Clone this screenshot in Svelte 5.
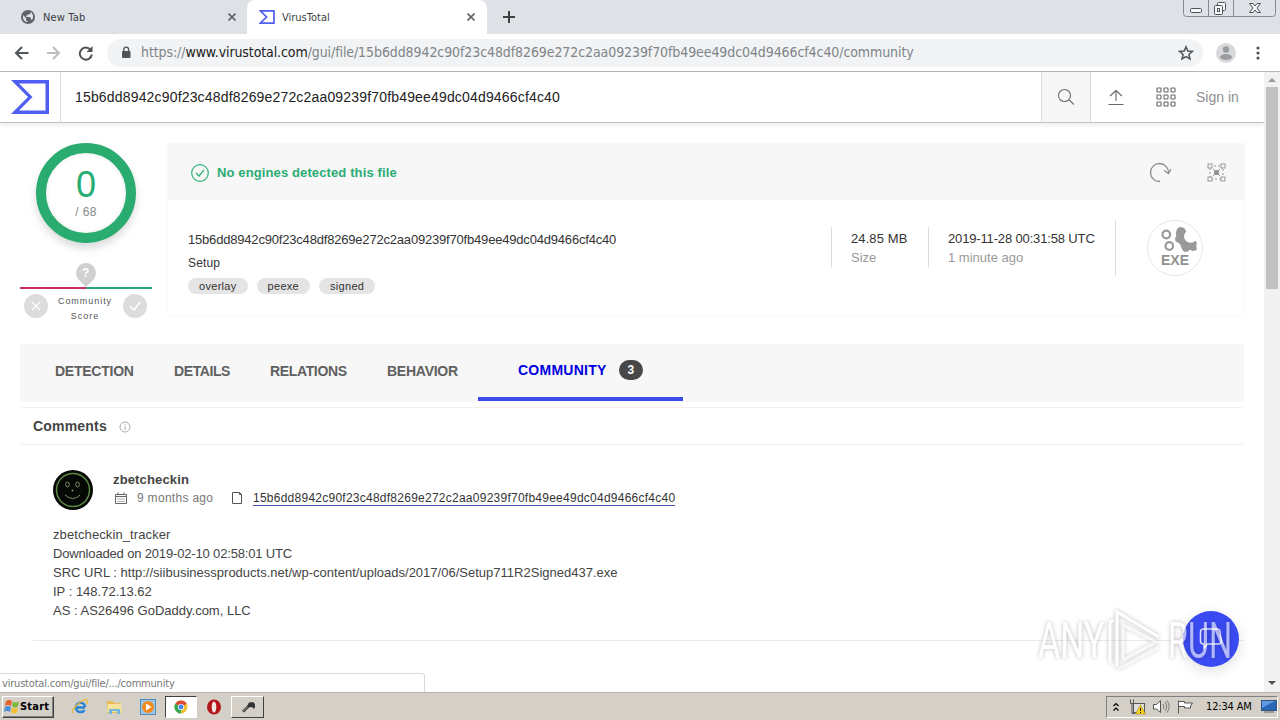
<script>
    const hash = '15b6dd8942c90f23c48df8269e272c2aa09239f70fb49ee49dc04d9466cf4c40';
    const tags = ['overlay', 'peexe', 'signed'];
    const tabs = ['Detection', 'Details', 'Relations', 'Behavior'];
    const cells = [0, 7, 14];
    const corners = [[1, 1], [14, 1], [1, 14], [14, 14]];
    const comment = [
        'zbetcheckin_tracker',
        'Downloaded on 2019-02-10 02:58:01 UTC',
        'SRC URL : http://siibusinessproducts.net/wp-content/uploads/2017/06/Setup711R2Signed437.exe',
        'IP : 148.72.13.62',
        'AS : AS26496 GoDaddy.com, LLC'
    ];
</script>

<div class="screen">
    <div class="tabstrip">
        <div class="tab tab-idle">
            <svg width="14" height="14" viewBox="0 0 14 14">
                <circle cx="7" cy="7" r="7" fill="#5f6368" />
                <path d="M2 5l3 3v2l2 2c-3 0-5-2-5-5zM6 2h4l-1 2-3 1-1 2h4l1 2 1 1c2-3 1-6-1-8z" fill="#dee1e6" />
            </svg>
            <span class="t-newtab">New Tab</span>
            <svg class="close" width="8" height="8" viewBox="0 0 8 8"><path d="M0.5 0.5l7 7M7.500.5l-7 7" /></svg>
        </div>
        <div class="tab tab-active">
            <svg width="16" height="16" viewBox="0 0 38 34">
                <path d="M3 2.500H35.500V31.500H3L18 17Z" fill="none" stroke="#4d5ef0" stroke-width="4" />
            </svg>
            <span class="t-vt">VirusTotal</span>
            <svg class="close" width="8" height="8" viewBox="0 0 8 8"><path d="M0.5 0.5l7 7M7.500.5l-7 7" /></svg>
        </div>
        <svg class="plus" width="12" height="12" viewBox="0 0 12 12"><path d="M6 0v12M0 6h12" stroke="#3c4043" stroke-width="2" /></svg>
        <svg class="winbtns" width="94" height="18" viewBox="0 0 94 18">
            <path d="M.5 0V13.500Q.5 16.500 3.500 16.500H89.500Q92.500 16.500 92.500 13.500V0M25.500 0V16M50.500 0V16" fill="none" stroke="#85888f" />
            <g fill="#f8f8fa" stroke="#4c5058">
                <rect x="7.500" y="8.500" width="11" height="4" rx="1" />
                <rect x="34.500" y="2.500" width="8" height="8" rx="1" />
                <rect x="31.500" y="5.500" width="8" height="9" rx="1" />
                <rect x="34.500" y="8.500" width="2" height="3" />
                <path d="M66.500 3.500h3.500l2 2.500 2-2.500h3.500l-3.500 4.500 3.500 4.500h-3.500l-2-2.500-2 2.500h-3.500l3.500-4.500z" />
            </g>
        </svg>
    </div>

    <div class="toolbar">
        <svg class="nav" width="80" height="16" viewBox="0 0 80 16" fill="none" stroke-width="2">
            <path d="M14.500 8H2M8 2L2 8l6 6" stroke="#505458" />
            <path d="M33 8h12M39 2l6 6-6 6" stroke="#babcbe" />
            <path d="M76.500 4.800A6 6 0 1 0 77.800 9.500" stroke="#505458" />
            <path d="M78.500 1v6h-6z" fill="#505458" />
        </svg>
        <div class="omnibox">
            <svg width="10" height="13" viewBox="0 0 10 13">
                <rect x="1" y="5" width="8.500" height="7" rx="1" fill="#505458" />
                <path d="M2.800 5.500V3.500a2.400 2.400 0 0 1 4.800 0v2" fill="none" stroke="#505458" stroke-width="1.300" />
            </svg>
            <span class="url">https://<b>www.virustotal.com</b>/gui/file/{hash}/community</span>
            <svg class="star" width="16" height="16" viewBox="0 0 16 16">
                <path d="M8 1.800l1.800 4.200 4.600.400-3.500 3 1.100 4.500-4-2.400-4 2.400 1.100-4.500-3.500-3 4.600-.4z" fill="none" stroke="#505458" stroke-width="1.500" />
            </svg>
        </div>
        <svg class="profile" width="20" height="20" viewBox="0 0 20 20">
            <circle cx="10" cy="10" r="10" fill="#d8d9db" />
            <circle cx="10" cy="6.500" r="3.200" fill="#9a9c9f" />
            <ellipse cx="10" cy="14" rx="6" ry="3" fill="#9a9c9f" />
        </svg>
        <svg width="4" height="14" viewBox="0 0 4 14" fill="#505458">
            <circle cx="2" cy="2" r="1.600" /><circle cx="2" cy="7" r="1.600" /><circle cx="2" cy="12" r="1.600" />
        </svg>
    </div>

    <div class="viewport">
        <div class="page">
            <header>
                <div class="brand">
                    <svg width="39" height="35" viewBox="0 0 39 35">
                        <path d="M0 0H38V34H0L17 17ZM8 3.500L21.500 17 8 30.500H34.500V3.500Z" fill="#4d5ef0" fill-rule="evenodd" />
                    </svg>
                </div>
                <div class="query">{hash}</div>
                <div class="search">
                    <svg width="18" height="18" viewBox="0 0 18 18" fill="none" stroke="#707070" stroke-width="1.100">
                        <circle cx="7.500" cy="7.500" r="6" /><path d="M12 12l5 4.500" />
                    </svg>
                </div>
                <div class="actions">
                    <svg width="16" height="16" viewBox="0 0 16 16" fill="none" stroke="#666" stroke-width="1.100">
                        <path d="M8 12V1.500M2 7l6-5.500L14 7M.5 15.500H15.500" />
                    </svg>
                    <svg class="apps" width="20" height="20" viewBox="0 0 20 20" fill="none" stroke="#666" stroke-width="1.100">
                        {#each cells as y}
                            {#each cells as x}
                                <rect x={x + 1} y={y + 1} width="4" height="4" rx=".6" />
                            {/each}
                        {/each}
                    </svg>
                    <span class="signin">Sign in</span>
                </div>
            </header>

            <main>
                <section class="summary">
                    <div class="score">
                        <div class="ring">
                            <span class="num">0</span>
                            <span class="total">/ 68</span>
                        </div>
                        <div class="gauge">
                            <svg width="20" height="24" viewBox="0 0 20 24">
                                <path d="M10 0a10 10 0 0 1 7 17L10 24 3 17A10 10 0 0 1 10 0z" fill="#d0d0d0" />
                            </svg>
                            <b>?</b>
                        </div>
                        <div class="bar"></div>
                        <div class="votes">
                            <svg width="24" height="24" viewBox="0 0 24 24">
                                <circle cx="12" cy="12" r="12" fill="#dcdcdc" /><path d="M8 8l8 8M16 8l-8 8" stroke="#fff" stroke-width="1.200" />
                            </svg>
                            <span>Community<br />Score</span>
                            <svg width="24" height="24" viewBox="0 0 24 24">
                                <circle cx="12" cy="12" r="12" fill="#dcdcdc" /><path d="M7 12l4 4 6-8" fill="none" stroke="#fff" stroke-width="1.400" />
                            </svg>
                        </div>
                    </div>

                    <div class="card">
                        <div class="verdict">
                            <svg width="18" height="18" viewBox="0 0 18 18" fill="none" stroke="#2fb279" stroke-width="1.200">
                                <circle cx="9" cy="9" r="8.300" /><path d="M5 9l3 3 5-6" />
                            </svg>
                            <span>No engines detected this file</span>
                            <svg class="reload" width="23" height="21" viewBox="0 0 23 21" fill="none" stroke="#8c8c8c" stroke-width="1.300">
                                <path d="M11 19.500A9 9 0 1 1 19.500 11M15 8.500l4.500 3 2.500-4.500" />
                            </svg>
                            <svg width="20" height="20" viewBox="0 0 20 20" fill="none" stroke="#999">
                                <rect x="3" y="3" width="13" height="13" stroke-dasharray="2 2" />
                                <g fill="#f7f7f7">
                                    {#each corners as [x, y]}
                                        <rect {x} {y} width="4" height="4" />
                                    {/each}
                                </g>
                                <rect x="7.500" y="7.500" width="4" height="4" fill="#888" /><path d="M6 6l7 7M13 6l-7 7" />
                            </svg>
                        </div>
                        <div class="facts">
                            <div class="file">
                                <div class="filehash">{hash}</div>
                                <div class="filename">Setup</div>
                                <div class="tags">
                                    {#each tags as tag}
                                        <span>{tag}</span>
                                    {/each}
                                </div>
                            </div>
                            <div class="fact size"><span>24.85 MB</span><small>Size</small></div>
                            <div class="fact date"><span>2019-11-28 00:31:58 UTC</span><small>1 minute ago</small></div>
                            <div class="type">
                                <svg width="56" height="56" viewBox="0 0 56 56">
                                    <circle cx="28" cy="28" r="27.500" fill="#fff" stroke="#e6e6e6" />
                                    <g fill="none" stroke="#999">
                                        <circle cx="19.300" cy="14.500" r="3.800" stroke-width="2.200" />
                                        <circle cx="22.300" cy="26" r="3.800" stroke-width="2.200" />
                                    </g>
                                    <path d="M30 9l3-2.300 4.300 1.300 2 3.700q-3 2.500-2 6.500 1.500 4 6 4.500 3 .3 5.200-2l1.300 2-.5 3 .5 4.300-4 1-3-1.300-2 1.800-3 .5-1.800-1.300-1.500-3-1.700-4-4.300-2.400-.5-3 1.300-2-.5-3.500z" fill="#999" />
                                    <text x="28" y="45" text-anchor="middle">EXE</text>
                                </svg>
                            </div>
                        </div>
                    </div>
                </section>

                <nav class="sections">
                    {#each tabs as tab}
                        <span class={tab.toLowerCase()}>{tab.toUpperCase()}</span>
                    {/each}
                    <div class="current"><span>COMMUNITY</span><i>3</i></div>
                </nav>

                <div class="heading">
                    <span>Comments</span>
                    <svg width="12" height="12" viewBox="0 0 12 12" fill="none" stroke="#aaa">
                        <circle cx="6" cy="6" r="5" /><path d="M6 5v4M6 3v1" />
                    </svg>
                </div>

                <article>
                    <div class="author">
                        <svg width="40" height="40" viewBox="0 0 40 40" fill="none">
                            <circle cx="20" cy="20" r="20" fill="#050805" />
                            <circle cx="20" cy="20" r="16.500" stroke="#5c8a45" stroke-width="1.500" />
                            <g stroke="#7a9066" stroke-width="1">
                                <ellipse cx="14.500" cy="14.500" rx="1.800" ry="2.500" /><ellipse cx="24.500" cy="14.500" rx="1.800" ry="2.500" />
                                <path d="M12 25q8 7 15 0M18.500 20.500h2M19.500 19.500v2" />
                            </g>
                        </svg>
                        <div>
                            <div class="name">zbetcheckin</div>
                            <div class="meta">
                                <svg width="14" height="13" viewBox="0 0 14 13" fill="none" stroke="#666">
                                    <path d="M1.500 2.500h11v9h-11zM1.500 4.500h11M4 .5v2M10 .5v2" />
                                    <path d="M3.500 7h7M3.500 9.500h7" stroke-dasharray="1 1" />
                                </svg>
                                <span class="when">9 months ago</span>
                                <svg class="doc" width="10" height="12" viewBox="0 0 10 12" fill="none" stroke="#555">
                                    <path d="M.5.5h7l2 2v9h-9zM7.500.5v2h2" />
                                </svg>
                                <span class="link">{hash}</span>
                            </div>
                        </div>
                    </div>
                    <div class="body">
                        {#each comment as line, i}
                            <div class="line{i}">{line}</div>
                        {/each}
                    </div>
                </article>
            </main>

            <div class="chat">
                <svg width="24" height="22" viewBox="0 0 24 22" fill="none" stroke="#e4e6ff" stroke-width="1.500">
                    <path d="M4.500 1h13.500q3 0 3 3l1.500 9q0 3-3 3h-11l-3.500 4v-4h-.5q-3 0-3-3V4q0-3 3-3z" />
                </svg>
            </div>
            <svg class="mark" width="206" height="70" viewBox="0 0 206 70">
                <g transform="translate(4 51) scale(.68 1)"><text>ANY</text></g>
                <g transform="translate(134 51) scale(.65 1)"><text>RUN</text></g>
                <g fill="none" stroke="#fff" stroke-width="3">
                    <path d="M76 56V15l4-2M83 60V5L125 30" />
                    <path d="M89 52V18L122 35 89 53" opacity=".75" />
                    <path d="M125 40L83 63" opacity=".6" />
                </g>
            </svg>
            <div class="status">virustotal.com/gui/file/.../community</div>
        </div>
        <div class="scrollbar">
            <i class="up"></i>
            <div class="thumb"></div>
            <i class="down"></i>
        </div>
    </div>

    <div class="taskbar">
        <div class="start">
            <svg width="17" height="16" viewBox="0 0 17 16">
                <path d="M3 2q3-2 6 0l-1 5q-3-2-6 0z" fill="#e8622b" />
                <path d="M10 2.500q3 2 6 0l-1 5q-3 2-6 0z" fill="#7db93b" />
                <path d="M2 8q3-2 6 0l-1 5q-3-2-6 0z" fill="#4a8fd8" />
                <path d="M9 8.500q3 2 6 0l-1 5q-3 2-6 0z" fill="#f4bd32" />
            </svg>
            <span>Start</span>
        </div>
        <div class="task first">
            <svg width="18" height="17" viewBox="0 0 18 17" fill="none">
                <path d="M14 9.500H5a4.500 4.500 0 0 1 9-.5M5 9.500q.5 5 5 4.500 2.500 0 3.500-2" stroke="#2b83d3" stroke-width="2.600" />
                <path d="M2 15Q-1 14 6 7T16 2q2 1-1 4" stroke="#e8b937" stroke-width="1.300" />
            </svg>
        </div>
        <div class="task">
            <svg width="17" height="16" viewBox="0 0 17 16">
                <path d="M1 2h6l1 2h7v10H1z" fill="#e6bd55" /><path d="M2 5h13l1 8H1z" fill="#f6e29b" />
                <path d="M3 15v-5h11v5h-3v-3H6v3z" fill="#75b6dc" />
            </svg>
        </div>
        <div class="task">
            <svg width="16" height="16" viewBox="0 0 16 16">
                <rect x=".5" y=".5" width="15" height="15" fill="#9cc7e8" stroke="#5289b5" />
                <circle cx="8" cy="8" r="6" fill="#f08a1d" /><path d="M6 4.500L11.500 8 6 11.500z" fill="#fff" />
            </svg>
        </div>
        <div class="task pressed">
            <svg width="14" height="14" viewBox="0 0 14 14">
                <circle cx="7" cy="7" r="6.500" fill="#f1c232" />
                <path d="M7 7L1.300 3.800A6.500 6.500 0 0 1 12.700 3.800z" fill="#dc4837" />
                <path d="M7 7L1.300 3.800A6.500 6.500 0 0 0 7 13.500z" fill="#35a853" />
                <circle cx="7" cy="7" r="3.100" fill="#fff" /><circle cx="7" cy="7" r="2.400" fill="#4285f4" />
            </svg>
        </div>
        <div class="task opera">
            <svg width="16" height="16" viewBox="0 0 16 16">
                <ellipse cx="8" cy="8" rx="7" ry="7.500" fill="#b5161b" /><ellipse cx="8" cy="8" rx="2.300" ry="5.500" fill="#efe6e2" />
            </svg>
        </div>
        <div class="task raised">
            <svg width="18" height="16" viewBox="0 0 18 16">
                <path d="M3 11.500l5-4.500 2-3.500 4-.5 2 2v3l-1 2-2-2-3 .5-5 5z" fill="#333" /><path d="M3 11.500l5-4.500 1 1.500-5 4.500z" fill="#777" />
            </svg>
        </div>
        <div class="tray">
            <svg width="6" height="10" viewBox="0 0 6 10" fill="none" stroke="#000" stroke-width="1.200"><path d="M.5 4L3 1.500 5.500 4M.5 8.500L3 6l2.500 2.500" /></svg>
            <svg class="net" width="17" height="16" viewBox="0 0 17 16">
                <rect x="4.500" y="4.500" width="11" height="9" fill="#ddd" stroke="#555" />
                <path d="M1.500.5v4h3V.5M3 4.500V14.500h3" fill="none" stroke="#555" />
                <path d="M11.500 6l5 9h-10z" fill="#fbd21c" stroke="#a88700" stroke-width=".6" /><path d="M11.500 9v3M11.500 13v1" stroke="#000" />
            </svg>
            <svg class="snd" width="17" height="16" viewBox="0 0 17 16" fill="none" stroke="#777">
                <path d="M.5 5.500h3L7.500 1.500v12l-4-3.500h-3z" fill="#fff" stroke="#555" /><path d="M10 5q2 2.500 0 5M12 3q3.500 4.500 0 9M14 1.500q4.500 6 0 12" />
            </svg>
            <svg class="flag" width="17" height="15" viewBox="0 0 17 15"><path d="M1.500 14.500V1.500M1.500 2.500h6v1.500h8l-2 3 0 2h-6v-1.500h-6" fill="#fff" stroke="#555" /></svg>
            <span>12:34 AM</span>
            <svg class="desk" width="16" height="13" viewBox="0 0 16 13"><rect x=".5" y=".5" width="15" height="10" fill="#2968b5" stroke="#31537c" /><path d="M1 1h13L1 8z" fill="#5e9ae0" /><path d="M3 12h10" stroke="#666" /></svg>
        </div>
    </div>
</div>

<style>
    :global(body) {
        margin: 0;
        background: #fff;
    }

    .screen {
        width: 1280px;
        height: 720px;
        display: flex;
        flex-direction: column;
        overflow: hidden;
        font-family: "Liberation Sans", Arial, sans-serif;
        color: #333;
        white-space: nowrap;
    }

    svg {
        display: block;
        flex: none;
    }

    .tabstrip, .toolbar, .url, .status {
        font-family: "DejaVu Sans Condensed", "DejaVu Sans", sans-serif;
    }

    .tabstrip {
        height: 34px;
        flex: none;
        display: flex;
        background: #dee1e6;
        font-size: 11px;
        color: #3c4043;
    }

    .tab {
        display: flex;
        align-items: center;
        box-sizing: border-box;
        height: 34px;
    }

    .tab-idle {
        width: 247px;
        padding: 0 11px 0 21px;
        gap: 8px;
    }

    .tab-active {
        width: 240px;
        padding: 0 12px;
        gap: 7px;
        background: #fff;
        border-radius: 8px 8px 0 0;
    }

    .t-newtab {
        letter-spacing: 0.15px;
    }

    .t-vt {
        letter-spacing: 0;
    }

    .close {
        margin-left: auto;
        stroke: #5f6368;
        stroke-width: 1.6;
    }

    .plus {
        margin: 11px 0 0 16px;
    }

    .winbtns {
        margin-left: auto;
        margin-right: 3px;
    }

    .toolbar {
        height: 37px;
        flex: none;
        display: flex;
        align-items: center;
        border-bottom: 1px solid #b4b6b5;
        padding-left: 14px;
    }

    .omnibox {
        width: 1096px;
        height: 28px;
        margin-left: 13px;
        border-radius: 14px;
        background: #f1f3f4;
        display: flex;
        align-items: center;
        box-sizing: border-box;
        padding: 0 9px 0 14px;
    }

    .url {
        margin-left: 10px;
        font-size: 14px;
        line-height: 16px;
        padding-bottom: 1px;
        color: #808488;
        letter-spacing: -0.09px;
    }

    .url b {
        font-weight: 400;
        color: #202124;
        letter-spacing: -0.1px;
    }

    .star {
        margin-left: auto;
    }

    .profile {
        margin: 0 20px 0 13px;
    }

    .viewport {
        height: 620px;
        flex: none;
        display: flex;
    }

    .page {
        width: 1264px;
        position: relative;
        overflow: hidden;
        background: #fff;
    }

    header {
        height: 50px;
        display: flex;
        border-bottom: 1px solid #c4c4c4;
        box-shadow: 0 2px 5px rgba(0, 0, 0, 0.08);
    }

    .brand {
        width: 61px;
        box-sizing: border-box;
        padding: 8px 0 0 11px;
        border-right: 1px solid #ddd;
    }

    .query {
        flex: 1;
        padding-left: 14px;
        line-height: 51px;
        font-size: 14px;
        letter-spacing: 0.17px;
        color: #222;
    }

    .search {
        width: 48px;
        display: flex;
        align-items: center;
        justify-content: center;
        background: #f7f7f7;
        border: 1px solid #ddd;
        border-width: 0 1px;
    }

    .actions {
        width: 173px;
        display: flex;
        align-items: center;
        box-sizing: border-box;
        padding-left: 17px;
    }

    .apps {
        margin-left: 32px;
    }

    .signin {
        margin-left: 20px;
        font-size: 14px;
        color: #909090;
    }

    main {
        padding: 20px 20px 0;
    }

    .summary {
        display: flex;
        gap: 15px;
    }

    .score {
        width: 132px;
        height: 201px;
        flex: none;
    }

    .ring {
        width: 80px;
        height: 80px;
        margin-left: 16px;
        border: 10px solid #2aab70;
        border-radius: 50%;
        box-shadow: 0 5px 9px rgba(0, 0, 0, 0.15), inset 0 0 4px rgba(0, 0, 0, 0.1);
        display: flex;
        flex-direction: column;
        align-items: center;
    }

    .num {
        margin-top: 12px;
        font-size: 36px;
        line-height: 40px;
        color: #25ae72;
    }

    .total {
        font-size: 12px;
        line-height: 15px;
        letter-spacing: 0.4px;
        color: #888;
    }

    .gauge {
        height: 24px;
        margin: 20px 0 0 56px;
        position: relative;
    }

    .gauge b {
        position: absolute;
        left: 6px;
        top: 3px;
        font-size: 12px;
        color: #fff;
    }

    .bar {
        height: 2px;
        background: linear-gradient(90deg, #cf2f60 50%, #2fa583 50%);
    }

    .votes {
        display: flex;
        margin: 5px 5px 0 4px;
        justify-content: space-between;
        text-align: center;
        font-size: 9px;
        line-height: 15px;
        letter-spacing: 0.95px;
        color: #555;
    }

    .votes span {
        margin-right: 1px;
    }

    .card {
        width: 1078px;
        height: 174px;
        flex: none;
        box-sizing: border-box;
        border: 1px solid #fafafa;
        border-top: 0;
    }

    .verdict {
        height: 57px;
        display: flex;
        align-items: center;
        background: #f7f7f7;
        padding: 2px 17px 0 23px;
        box-sizing: border-box;
        font-size: 13px;
        font-weight: 700;
        letter-spacing: 0.12px;
        color: #2aad73;
    }

    .verdict span {
        margin-left: 8px;
    }

    .reload {
        margin: 0 35px 0 auto;
    }

    .facts {
        display: flex;
        align-items: flex-start;
        padding-left: 20px;
    }

    .file {
        width: 643px;
        padding-top: 32px;
    }

    .filehash {
        font-size: 13px;
        line-height: 16px;
        letter-spacing: -0.19px;
    }

    .filename {
        margin-top: 7px;
        font-size: 12px;
        line-height: 16px;
        letter-spacing: 0.15px;
    }

    .tags {
        display: flex;
        gap: 9px;
        margin-top: 7px;
    }

    .tags span {
        height: 16px;
        padding: 0 11px;
        border-radius: 8px;
        background: #e4e4e4;
        font-size: 11px;
        line-height: 16px;
        letter-spacing: 0.3px;
    }

    .fact {
        height: 41px;
        margin-top: 27px;
        padding-left: 19px;
        box-sizing: border-box;
        border-left: 1px solid #ddd;
        font-size: 13px;
        line-height: 19px;
        padding-top: 2px;
    }

    .fact span, .fact small {
        display: block;
    }

    .fact small {
        font-size: 13px;
        color: #999;
    }

    .size {
        width: 97px;
    }

    .size span {
        letter-spacing: 0.1px;
    }

    .date {
        width: 187px;
    }

    .date span {
        letter-spacing: -0.15px;
    }

    .type {
        margin-top: 20px;
        padding-left: 31px;
        border-left: 1px solid #ddd;
    }

    .type text {
        font-size: 14px;
        font-weight: 700;
        fill: #929292;
    }

    .sections {
        height: 58px;
        width: 1224px;
        background: #f7f7f7;
        display: flex;
        font-size: 14px;
        font-weight: 700;
        line-height: 54px;
        letter-spacing: -0.25px;
        color: #606060;
        box-sizing: border-box;
        padding-left: 35px;
    }

    .detection {
        width: 119px;
    }

    .details {
        width: 96px;
        letter-spacing: -0.4px;
    }

    .relations {
        width: 117px;
        letter-spacing: -0.35px;
    }

    .behavior {
        width: 91px;
    }

    .current {
        display: flex;
        align-items: center;
        box-sizing: border-box;
        width: 205px;
        height: 57px;
        padding: 0 40px 2px;
        border-bottom: 4px solid #3b4bea;
        letter-spacing: 0.25px;
        color: #0000e0;
    }

    .current i {
        width: 24px;
        height: 20px;
        margin-left: auto;
        border-radius: 10px;
        background: #484848;
        color: #fff;
        font-style: normal;
        font-size: 12px;
        line-height: 20px;
        text-align: center;
    }

    .heading {
        height: 36px;
        margin-top: 5px;
        padding-left: 13px;
        display: flex;
        align-items: center;
        gap: 12px;
        border: 1px solid #efefef;
        border-width: 1px 0;
        font-size: 14px;
        font-weight: 700;
        letter-spacing: 0.2px;
        color: #444;
    }

    .heading svg {
        margin-top: 2px;
    }

    article {
        margin-left: 13px;
        height: 195px;
        border-bottom: 1px solid #eaeaea;
        padding-left: 20px;
    }

    .author {
        display: flex;
        gap: 20px;
        padding-top: 25px;
    }

    .name {
        padding-top: 1px;
        font-size: 13px;
        font-weight: 700;
        line-height: 18px;
        letter-spacing: 0.15px;
        color: #444;
    }

    .meta {
        display: flex;
        align-items: center;
        font-size: 12px;
        line-height: 14px;
        margin-top: 1px;
    }

    .meta svg {
        margin-left: 1px;
    }

    .when {
        margin-left: 9px;
        width: 94px;
        letter-spacing: 0.3px;
        color: #777;
    }

    .link {
        margin: 1px 0 0 11px;
        border-bottom: 1px solid #4a54b0;
        letter-spacing: 0.25px;
    }

    .body {
        margin-top: 15px;
        font-size: 13px;
        line-height: 19px;
        color: #444;
    }

    .line0 {
        letter-spacing: 0.1px;
    }

    .line1 {
        letter-spacing: -0.16px;
    }

    .line2 {
        letter-spacing: 0.01px;
    }

    .chat {
        position: absolute;
        left: 1183px;
        top: 539px;
        width: 56px;
        height: 56px;
        border-radius: 50%;
        background: #3b4bf4;
        box-shadow: 0 4px 14px rgba(0, 0, 0, 0.12);
        display: flex;
        align-items: center;
        justify-content: center;
    }

    .mark {
        position: absolute;
        left: 1034px;
        top: 535px;
        overflow: visible;
        opacity: 0.6;
        filter: drop-shadow(0 0 2px rgba(0, 0, 0, 0.45));
    }

    .mark text {
        font-family: Roboto, "Liberation Sans", sans-serif;
        font-size: 50px;
        fill: #fff;
    }

    .status {
        position: absolute;
        left: 0;
        bottom: 0;
        width: 422px;
        height: 18px;
        padding-left: 2px;
        background: #fff;
        border: 1px solid #d9d9d9;
        border-width: 1px 1px 0 0;
        border-radius: 0 3px 0 0;
        font-size: 11px;
        line-height: 19px;
        letter-spacing: -0.2px;
        color: #777;
    }

    .scrollbar {
        width: 16px;
        display: flex;
        flex-direction: column;
        align-items: center;
        background: #f1f1f1;
    }

    .scrollbar i {
        border: 4px solid transparent;
    }

    .up {
        margin-top: 2px;
        border-bottom-color: #9a9a9a !important;
    }

    .thumb {
        width: 12px;
        height: 202px;
        margin-top: 5px;
        background: #c1c1c1;
    }

    .down {
        margin: auto 0 3px;
        border-top-color: #505050 !important;
    }

    .taskbar {
        height: 28px;
        box-sizing: border-box;
        border-top: 1px solid #b8b5ae;
        background: #d4d0c8;
        display: flex;
        align-items: center;
        padding: 0 2px 0 2px;
    }

    .start {
        width: 52px;
        height: 22px;
        box-sizing: border-box;
        display: flex;
        align-items: center;
        border: 1px solid;
        border-color: #fff #404040 #404040 #fff;
        box-shadow: inset -1px -1px #808080;
        font-family: "DejaVu Sans Condensed", "DejaVu Sans", sans-serif;
        font-weight: 700;
        font-size: 11px;
        letter-spacing: 0.2px;
        color: #000;
    }

    .task {
        width: 34px;
        height: 22px;
        box-sizing: border-box;
        display: flex;
        align-items: center;
        justify-content: center;
    }

    .first {
        margin-left: 9px;
    }

    .pressed {
        width: 32px;
        background: #fff;
        border: 1px solid;
        border-color: #404040 #fff #fff #404040;
    }

    .raised {
        width: 33px;
        border: 1px solid;
        border-color: #fff #404040 #404040 #fff;
    }

    .tray {
        width: 172px;
        height: 22px;
        margin-left: auto;
        box-sizing: border-box;
        border: 1px solid;
        border-color: #808080 #fff #fff #808080;
        display: flex;
        align-items: center;
        padding-left: 6px;
        font-family: "DejaVu Sans Condensed", "DejaVu Sans", sans-serif;
        font-size: 11px;
        letter-spacing: -0.15px;
        color: #000;
    }

    .net {
        margin-left: 10px;
    }

    .snd, .flag {
        margin-left: 7px;
    }

    .tray span {
        margin-left: 12px;
    }

    .desk {
        margin-left: auto;
    }
</style>
